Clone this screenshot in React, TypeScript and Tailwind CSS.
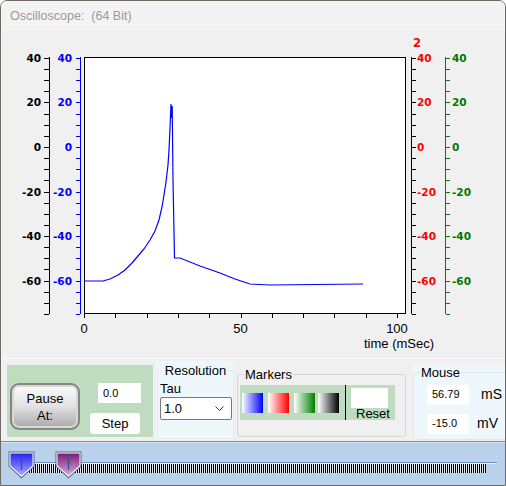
import React from "react";

const Y = (v: number) => 147 - 2.227 * v;
const X = (t: number) => 84 + 3.13 * t;

const yTicks: number[] = [];
for (let v = 40; v >= -75; v -= 5) yTicks.push(v);
const yLabels = [40, 20, 0, -20, -40, -60];
const xTicks = [0, 10, 20, 30, 40, 50, 60, 70, 80, 90, 100];

const trace =
  "84,281 103,281 110,279 118,275 125,270 132,263 138,256 144,249 150,240 155,231 159,220 162,207 164,195 166,182 168,165 169,150 170,128 171,104 171.6,118 172.2,106 173,180 174.5,258 180,258 200,266 220,273 235,279 250,284 270,285 363,284";

const Scope = () => (
  <svg width={504} height={327} viewBox="1 31 504 327" className="block">
    {/* plot box */}
    <rect x={84.5} y={57.5} width={321} height={256} fill="#fff" stroke="#000" />
    <polyline points={trace} fill="none" stroke="#0000ff" strokeWidth={1.2} />

    {/* axes */}
    <line x1={49.5} y1={57} x2={49.5} y2={314} stroke="#000" />
    <line x1={80.5} y1={57} x2={80.5} y2={314} stroke="#0000ff" />
    <line x1={411.5} y1={57} x2={411.5} y2={314} stroke="#000" />
    <line x1={445.5} y1={57} x2={445.5} y2={314} stroke="#008000" />

    {yTicks.map((v) => {
      const y = Math.round(Y(v)) + 0.5;
      return (
        <g key={v}>
          <line x1={44} y1={y} x2={49} y2={y} stroke="#000" />
          <line x1={76} y1={y} x2={80} y2={y} stroke="#0000ff" />
          <line x1={412} y1={y} x2={416} y2={y} stroke="#000" />
          <line x1={446} y1={y} x2={450} y2={y} stroke="#008000" />
        </g>
      );
    })}

    <g fontFamily="'DejaVu Sans', sans-serif" fontWeight="bold" fontSize="10.5">
      {yLabels.map((v) => {
        const y = Math.round(Y(v)) + 4;
        return (
          <g key={v}>
            <text x={41} y={y} textAnchor="end" fill="#000">{v}</text>
            <text x={72} y={y} textAnchor="end" fill="#0000ff">{v}</text>
            <text x={417} y={y} fill="#ff0000">{v}</text>
            <text x={452} y={y} fill="#007800">{v}</text>
          </g>
        );
      })}
      <text x={413} y={47} fill="#ff0000" fontSize="11.5">2</text>
    </g>

    {xTicks.map((t) => {
      const x = Math.round(X(t)) + 0.5;
      return <line key={t} x1={x} y1={314} x2={x} y2={318} stroke="#000" />;
    })}
    <g fontFamily="'Liberation Sans', sans-serif" fontSize="13" fill="#000">
      <text x={X(0)} y={333} textAnchor="middle">0</text>
      <text x={X(50)} y={333} textAnchor="middle">50</text>
      <text x={X(100)} y={333} textAnchor="middle">100</text>
      <text x={364} y={348}>time (mSec)</text>
    </g>
  </svg>
);

const Thumb = ({ top, bottom }: { top: string; bottom: string }) => (
  <svg width={27} height={28} viewBox="0 0 27 28">
    <defs>
      <linearGradient id={`g${top}`} x1="0" y1="0" x2="0" y2="1">
        <stop offset="0" stopColor={top} />
        <stop offset="1" stopColor={bottom} />
      </linearGradient>
    </defs>
    <path d="M0.5,0.5 H26.5 V15.5 L13.5,27.5 L0.5,15.5 Z" fill="#5a6c80" />
    <path d="M1.5,1.5 H25.5 V15 L13.5,26 L1.5,15 Z" fill="#fff" />
    <path d="M2.5,2.5 H24.5 V14.6 L13.5,24.6 L2.5,14.6 Z" fill={`url(#g${top})`} />
    <line x1={13.5} y1={7} x2={13.5} y2={19} stroke="#2f5a86" strokeWidth={1.4} />
  </svg>
);

const Swatch = ({ color }: { color: string }) => (
  <div
    className="h-[20px] w-[21px] shrink-0"
    style={{ background: `linear-gradient(90deg, #fff, ${color})` }}
  />
);

export default function App() {
  return (
    <div className="flex h-[486px] w-[506px] flex-col overflow-hidden rounded-t-[7px] border border-[#6e6a64] bg-[#f0f0f0] font-['Liberation_Sans',sans-serif] text-black">
      {/* title */}
      <div className="flex h-[30px] shrink-0 items-center bg-[#f3f3f3] pl-[9px] text-[12.5px] text-[#9a9a9a]">
        Oscilloscope:&nbsp; (64 Bit)
      </div>

      {/* chart */}
      <div className="h-[327px] shrink-0">
        <Scope />
      </div>

      {/* controls */}
      <div className="flex h-[83px] shrink-0 items-start border-t border-[#fbfbfb] text-[13px]">
        {/* pause / step */}
        <div className="ml-[6px] mt-[6px] flex h-[72px] w-[146px] shrink-0 items-start bg-[#c0dcc0] pl-[3px] pt-[18px]">
          <button className="flex h-[47px] w-[70px] flex-col items-center justify-center rounded-[9px] border-2 border-[#858585] bg-linear-to-b from-[#fbfbfb] via-[#e2e2e2] to-[#a8a8a8] leading-[17px] shadow-[inset_0_0_0_2px_#d8d8d8]">
            <span>Pause</span>
            <span>At:</span>
          </button>
          <div className="ml-[10px] flex w-[51px] flex-col items-end gap-[10px]">
            <div className="flex h-[20px] w-[43px] items-center bg-white pl-[5px] text-[11px]">0.0</div>
            <button className="mr-[1px] h-[21px] w-[50px] rounded-[3px] bg-[#fdfdfd] text-[13px]">Step</button>
          </div>
        </div>

        {/* resolution */}
        <div className="ml-[3px] mt-[2px] h-[79px] w-[77px] shrink-0 bg-[#eef8fc] px-px pt-[2px]">
          <fieldset className="h-[76px] rounded-[2px] border border-[#e2edf2] px-px">
            <legend className="mx-auto px-[2px] leading-[15px]">Resolution</legend>
            <div className="ml-px mt-[3px] leading-[15px]">Tau</div>
            <div className="ml-px mt-px flex h-[23px] w-[72px] items-center justify-between rounded-[2px] border border-[#7a7a7a] bg-white pl-[3px] pr-[7px]">
              <span>1.0</span>
              <svg width={9} height={6} viewBox="0 0 9 6">
                <polyline points="0.5,0.5 4.5,4.5 8.5,0.5" fill="none" stroke="#333" strokeWidth={1} />
              </svg>
            </div>
          </fieldset>
        </div>

        {/* markers */}
        <fieldset className="ml-[4px] mt-[8px] h-[70px] w-[169px] shrink-0 rounded-[3px] border border-[#d6d6d6] px-[2px]">
          <legend className="ml-[4px] px-px leading-[15px]">Markers</legend>
          <div className="mt-[3px] flex h-[35px] w-[155px] items-start bg-[#c0dcc0] pl-[2px]">
            <div className="mt-[8px] flex items-start">
              <Swatch color="#0000ff" />
              <div className="w-[5px]" />
              <Swatch color="#ff0000" />
              <div className="w-[5px]" />
              <Swatch color="#008000" />
              <div className="w-[3px]" />
              <Swatch color="#000000" />
            </div>
            <div className="ml-[6px] h-[35px] w-px bg-black" />
            <div className="ml-[5px] flex flex-col">
              <div className="mt-[3px] h-[20px] w-[37px] bg-white" />
              <div className="ml-[5px] mt-[-1px] leading-[13px]">Reset</div>
            </div>
          </div>
        </fieldset>

        {/* mouse */}
        <div className="ml-[7px] mt-[6px] h-[75px] w-[92px] shrink-0 overflow-hidden bg-[#eef8fc]">
          <fieldset className="h-[75px] w-[110px] rounded-[2px] border border-[#dde8ee] pl-[2px]">
            <legend className="ml-[4px] px-px leading-[15px]">Mouse</legend>
            <div className="ml-[11px] mt-[4px] flex items-center">
              <div className="flex h-[20px] w-[42px] items-center bg-white pl-[5px] text-[11px]">56.79</div>
              <span className="ml-[12px] text-[14px]">mS</span>
            </div>
            <div className="ml-[11px] mt-[8px] flex items-center">
              <div className="flex h-[20px] w-[42px] items-center bg-white pl-[5px] text-[11px]">-15.0</div>
              <span className="ml-[8px] text-[14px]">mV</span>
            </div>
          </fieldset>
        </div>
      </div>

      {/* slider */}
      <div className="relative h-[44px] shrink-0 border-t border-[#8c8c8c] bg-[#b9d1ea]">
        <div className="absolute left-0 right-0 top-0 h-px bg-[#d8e6f4]" />
        <div className="absolute left-[32px] top-[20px] h-px w-[464px] bg-[#6f92bb]" />
        <div className="absolute left-[32px] top-[21px] h-px w-[464px] bg-[#e6eef7]" />
        <div className="absolute left-[26px] top-[22px] h-[9px] w-[459px] bg-[repeating-linear-gradient(90deg,#000_0_1px,#e8eef4_1px_2px)]" />
        <div className="absolute left-[7px] top-[9px]">
          <Thumb top="#2626f0" bottom="#a8a8ff" />
        </div>
        <div className="absolute left-[54px] top-[9px]">
          <Thumb top="#7a1c7a" bottom="#d8a8d8" />
        </div>
      </div>
    </div>
  );
}
